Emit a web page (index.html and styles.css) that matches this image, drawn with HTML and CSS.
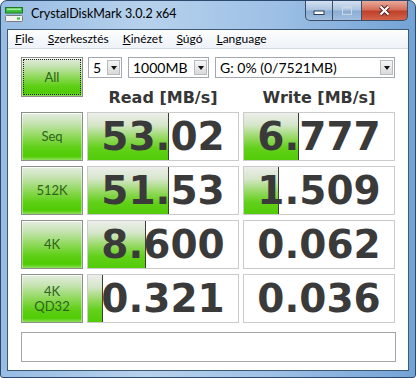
FILE: index.html
```html
<!DOCTYPE html>
<html lang="hu">
<head>
    <meta charset="UTF-8">
    <title>CrystalDiskMark 3.0.2 x64</title>
    <link rel="stylesheet" href="styles.css">
</head>
<body>
    <div class="window">
        <div class="titlebar">
            <svg class="app-icon" width="18" height="15" viewBox="0 0 18 15">
                <rect x="0.5" y="0.5" width="17" height="5.5" fill="#3fbf3f" stroke="#1f7a1f"/>
                <rect x="2" y="1.5" width="14" height="1.5" fill="#a8eca8"/>
                <rect x="0.5" y="8.5" width="17" height="6" rx="1" fill="#f2f2f2" stroke="#7a7a7a"/>
                <rect x="12" y="10.5" width="3" height="2" fill="#2fbf2f"/>
            </svg>
            <span class="title">CrystalDiskMark 3.0.2 x64</span>
            <div class="caption">
                <div class="cap-btn min">
                    <svg width="12" height="6" viewBox="0 0 12 6"><rect x="1" y="1" width="10" height="3.5" fill="#fff" stroke="#2c3e58"/></svg>
                </div>
                <div class="cap-btn max">
                    <svg width="12" height="11" viewBox="0 0 12 11"><rect x="1.5" y="1.5" width="9" height="8" fill="none" stroke="#c9d6e6" stroke-width="1"/><rect x="1.5" y="1.5" width="9" height="2" fill="#c9d6e6"/></svg>
                </div>
                <div class="cap-btn close">
                    <svg width="13" height="11" viewBox="0 0 13 11">
                        <path d="M2.5 1.5 L10.5 9.5 M10.5 1.5 L2.5 9.5" stroke="#4a1a1a" stroke-width="4"/>
                        <path d="M2.5 1.5 L10.5 9.5 M10.5 1.5 L2.5 9.5" stroke="#fff" stroke-width="2.2"/>
                    </svg>
                </div>
            </div>
        </div>

        <div class="client">
            <ul class="menubar">
                <li><u>F</u>ile</li>
                <li><u>S</u>zerkesztés</li>
                <li><u>K</u>inézet</li>
                <li><u>S</u>úgó</li>
                <li><u>L</u>anguage</li>
            </ul>

            <div class="main">
                <div class="top">
                    <div class="btn all">All</div>
                    <div class="controls">
                        <div class="combos">
                            <div class="combo c-count"><span>5</span><i class="arrow"></i></div>
                            <div class="combo c-size"><span>1000MB</span><i class="arrow"></i></div>
                            <div class="combo c-drive"><span>G: 0% (0/7521MB)</span><i class="arrow"></i></div>
                        </div>
                        <div class="headers">
                            <div>Read [MB/s]</div>
                            <div>Write [MB/s]</div>
                        </div>
                    </div>
                </div>

                <div class="results">
                    <div class="btn">Seq</div>
                    <div class="value bar" style="--fill: 80px">53.02</div>
                    <div class="value bar" style="--fill: 54px">6.777</div>

                    <div class="btn">512K</div>
                    <div class="value bar" style="--fill: 80px">51.53</div>
                    <div class="value bar" style="--fill: 34px">1.509</div>

                    <div class="btn">4K</div>
                    <div class="value bar" style="--fill: 57px">8.600</div>
                    <div class="value">0.062</div>

                    <div class="btn">4K<br>QD32</div>
                    <div class="value bar" style="--fill: 14px">0.321</div>
                    <div class="value">0.036</div>
                </div>

                <div class="comment"></div>
            </div>
        </div>
    </div>
</body>
</html>
```

FILE: styles.css
```css
* {
    margin: 0;
    padding: 0;
    box-sizing: border-box;
}
body {
    width: 416px;
    height: 378px;
    background-color: #fff;
    font-family: Lato, "Liberation Sans", sans-serif;
    font-size: 12px;
    color: #000;
}
.window {
    width: 416px;
    height: 378px;
    display: flex;
    flex-direction: column;
    border: 1px solid #2b4a6e;
    border-radius: 7px 7px 3px 3px;
    overflow: hidden;
    background: linear-gradient(to right, #98bce3 0%, #b6d1ec 35%, #9fc1e6 65%, #73a3d5 100%);
}
.titlebar {
    height: 28px;
    flex-shrink: 0;
    display: flex;
    align-items: flex-start;
}
.app-icon {
    margin: 6px 0 0 4px;
}
.title {
    margin: 5px 0 0 8px;
    font-size: 12.5px;
    line-height: 16px;
    color: #000;
}
.caption {
    margin-left: auto;
    margin-right: 7px;
    display: flex;
    height: 20px;
}
.cap-btn {
    display: flex;
    align-items: center;
    justify-content: center;
    border: 1px solid #3b4e6a;
    border-top: none;
    background: linear-gradient(to bottom, #d3e1f1 0%, #adc5e0 45%, #8badd4 55%, #a3bfe0 100%);
}
.cap-btn.min {
    width: 28px;
    border-radius: 0 0 0 5px;
    align-items: flex-end;
    padding-bottom: 4px;
}
.cap-btn.max {
    width: 29px;
    border-left: none;
}
.cap-btn.close {
    width: 46px;
    border-left: none;
    border-radius: 0 0 5px 0;
    background: linear-gradient(to bottom, #e9a99b 0%, #d4705c 45%, #c0412a 55%, #d2644a 100%);
}
.client {
    flex: 1;
    margin: 0 6px 6px;
    border: 1px solid #3d5878;
    background-color: #fff;
    display: flex;
    flex-direction: column;
}
.menubar {
    list-style: none;
    display: flex;
    height: 19px;
    border-bottom: 1px solid #d2dae4;
    background: linear-gradient(to bottom, #fcfdfe, #eef3f9);
}
.menubar li {
    padding: 0 7px;
    line-height: 18px;
    font-size: 12px;
}
.main {
    padding: 8px 12px 0 13px;
}
.top {
    display: flex;
    gap: 4px;
}
.btn {
    width: 62px;
    display: flex;
    align-items: center;
    justify-content: center;
    text-align: center;
    font-size: 13px;
    line-height: 15px;
    color: #2f621c;
    border: 1px solid #8b9088;
    background: linear-gradient(to bottom, #e4ede0 0%, #c6e3b2 22%, #8fd95a 50%, #5dcf14 75%, #4fcb04 92%, #8ee05a 100%);
    box-shadow: inset 0 1px 0 rgba(255, 255, 255, 0.8), inset 1px 0 0 rgba(255, 255, 255, 0.4), inset -1px 0 0 rgba(255, 255, 255, 0.4);
}
.all {
    height: 40px;
    outline: 1px dotted #222;
    outline-offset: -3px;
}
.controls {
    display: flex;
    flex-direction: column;
    width: 308px;
}
.combos {
    display: flex;
    gap: 6px;
    height: 21px;
    padding-left: 1px;
}
.combo {
    display: flex;
    align-items: center;
    padding: 1px;
    border: 1px solid #a3a8ae;
    background-color: #fff;
    font-size: 14px;
}
.combo span {
    flex: 1;
    padding-left: 3px;
}
.c-count {
    width: 34px;
}
.c-size {
    width: 81px;
}
.c-drive {
    width: 180px;
}
.arrow {
    width: 13px;
    height: 15px;
    display: flex;
    align-items: center;
    justify-content: center;
    border: 1px solid #b8bbbf;
    background: linear-gradient(to bottom, #f6f6f6, #d9d9d9);
}
.arrow::after {
    content: "";
    border-left: 3.5px solid transparent;
    border-right: 3.5px solid transparent;
    border-top: 4px solid #111;
}
.headers {
    display: grid;
    grid-template-columns: 152px 152px;
    column-gap: 4px;
    margin-top: 10px;
    font-family: "DejaVu Sans", sans-serif;
    font-weight: bold;
    font-size: 16px;
    line-height: 19px;
    color: #363636;
    text-align: center;
}
.results {
    display: grid;
    grid-template-columns: 62px 152px 152px;
    grid-auto-rows: 49px;
    gap: 5px 4px;
    margin-top: 5px;
}
.value {
    border: 1px solid #cbcbcb;
    background-color: #fff;
    font-family: "DejaVu Sans", sans-serif;
    font-weight: bold;
    font-size: 39px;
    line-height: 47px;
    text-align: center;
    color: #3a3a3a;
}
.value.bar {
    background:
        linear-gradient(#3d3d3d, #3d3d3d) var(--fill) 0 / 1px 100% no-repeat,
        linear-gradient(to bottom, #eceeea 0%, #d6e6cb 25%, #97d964 52%, #62d01a 75%, #52cc08 100%) 0 0 / var(--fill) 100% no-repeat,
        #fff;
}
.comment {
    height: 30px;
    margin-top: 9px;
    border: 1px solid #a6a6a6;
    background-color: #fff;
}
```
